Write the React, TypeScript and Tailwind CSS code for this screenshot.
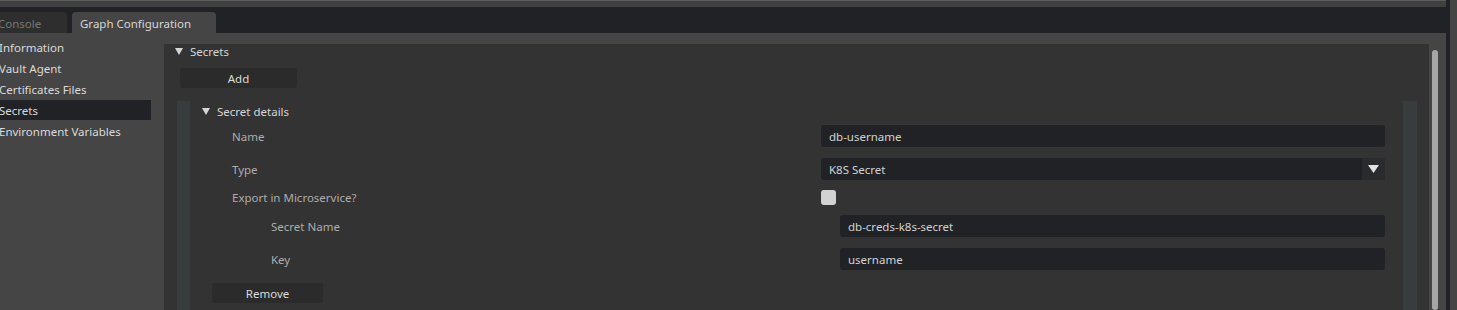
import React from "react";

const Tri = ({ w = 8, h = 7, className = "" }: { w?: number; h?: number; className?: string }) => (
  <svg width={w} height={h} viewBox={`0 0 ${w} ${h}`} className={className}>
    <polygon points={`0,0 ${w},0 ${w / 2},${h}`} fill="currentColor" />
  </svg>
);

const Field = ({ value }: { value: string }) => (
  <div className="h-[22px] flex-1 bg-[#212226] rounded-[3px] flex items-center pl-[8px] pt-[1px] text-[#d2d2d2]">
    {value}
  </div>
);

export default function App() {
  const items = ["Information", "Vault Agent", "Certificates Files", "Secrets", "Environment Variables"];
  return (
    <div className="w-[1457px] h-[310px] overflow-hidden flex bg-[#454545] text-[11.5px] leading-none font-['Noto_Sans',sans-serif]">
      <div className="w-[1446px] flex flex-col">
        <div className="h-[1px] bg-[#5c5c5c]" />
        <div className="h-[6px] bg-[#404040]" />
        <div className="h-[26px] bg-[#212226] flex items-end gap-[5px]">
          <div className="w-[67px] h-[21px] bg-[#2e2e2e] rounded-tr-[4px] flex items-center pt-[2px] overflow-hidden">
            <span className="ml-[-2px] text-[#777777]">Console</span>
          </div>
          <div className="w-[144px] h-[21px] bg-[#454545] rounded-t-[4px] flex items-center pl-[8px] pt-[2px] text-[#d6d6d6]">
            Graph Configuration
          </div>
        </div>
        <div className="flex-1 flex min-h-0">
          <div className="w-[151px] pt-[4px] flex flex-col gap-[1px]">
            {items.map((t) => (
              <div
                key={t}
                className={`h-[20px] flex items-center pt-[2px] whitespace-nowrap text-[#dadada] ${t === "Secrets" ? "bg-[#212226]" : ""}`}
              >
                <span className="ml-[-1px]">{t}</span>
              </div>
            ))}
          </div>
          <div className="w-[13px]" />
          <div className="w-[1265px] pt-[11px] flex flex-col">
            <div className="flex-1 bg-[#333333] flex flex-col">
              <div className="h-[14px] flex items-center pl-[11px] gap-[7px] text-[#d6d6d6]">
                <Tri />
                <span className="pt-[2px]">Secrets</span>
              </div>
              <div className="ml-[16px] mt-[10px] w-[117px] h-[20px] bg-[#2b2b2b] rounded-[3px] flex items-center justify-center pt-[1px] text-[#dadada]">
                Add
              </div>
              <div className="mt-[13px] ml-[13px] mr-[12px] flex-1 border-l-[13px] border-r-[14px] border-[#383c3c] bg-[#333333] flex flex-col pt-[3px]">
                <div className="h-[14px] flex items-center pl-[12px] gap-[7px] text-[#d6d6d6]">
                  <Tri />
                  <span className="pt-[2px]">Secret details</span>
                </div>
                <div className="mt-[7px] h-[22px] flex items-center pr-[18px]">
                  <div className="pl-[42px] pt-[1px] w-[631px] text-[#adadad]">Name</div>
                  <Field value="db-username" />
                </div>
                <div className="mt-[11px] h-[22px] flex items-center pr-[18px]">
                  <div className="pl-[42px] pt-[1px] w-[631px] text-[#adadad]">Type</div>
                  <div className="h-[22px] flex-1 bg-[#212226] rounded-[3px] flex items-center text-[#d2d2d2]">
                    <span className="pl-[8px] pt-[1px] flex-1">K8S Secret</span>
                    <div className="w-[23px] h-[22px] bg-[#2a2b2d] rounded-r-[3px] flex items-center pl-[6px] text-[#e2e2e2]">
                      <Tri w={11} h={8} />
                    </div>
                  </div>
                </div>
                <div className="mt-[10px] h-[15px] flex items-center pr-[18px]">
                  <div className="pl-[42px] pt-[1px] w-[631px] text-[#adadad]">Export in Microservice?</div>
                  <div className="w-[15px] h-[15px] rounded-[3px] bg-[#d2d2d2]" />
                </div>
                <div className="mt-[10px] h-[22px] flex items-center pr-[18px]">
                  <div className="pl-[81px] pt-[1px] w-[650px] text-[#adadad]">Secret Name</div>
                  <Field value="db-creds-k8s-secret" />
                </div>
                <div className="mt-[11px] h-[22px] flex items-center pr-[18px]">
                  <div className="pl-[81px] pt-[1px] w-[650px] text-[#adadad]">Key</div>
                  <Field value="username" />
                </div>
                <div className="ml-[22px] mt-[13px] w-[111px] h-[20px] bg-[#2b2b2b] rounded-[3px] flex items-center justify-center pt-[1px] text-[#dadada]">
                  Remove
                </div>
              </div>
            </div>
          </div>
          <div className="w-[17px] pt-[17px] pl-[3px] flex flex-col">
            <div className="w-[6px] flex-1 bg-[#a6a6a6] rounded-[3px]" />
          </div>
        </div>
      </div>
      <div className="w-[4px] bg-[#212226]" />
      <div className="w-[7px] bg-[#454545]" />
    </div>
  );
}
